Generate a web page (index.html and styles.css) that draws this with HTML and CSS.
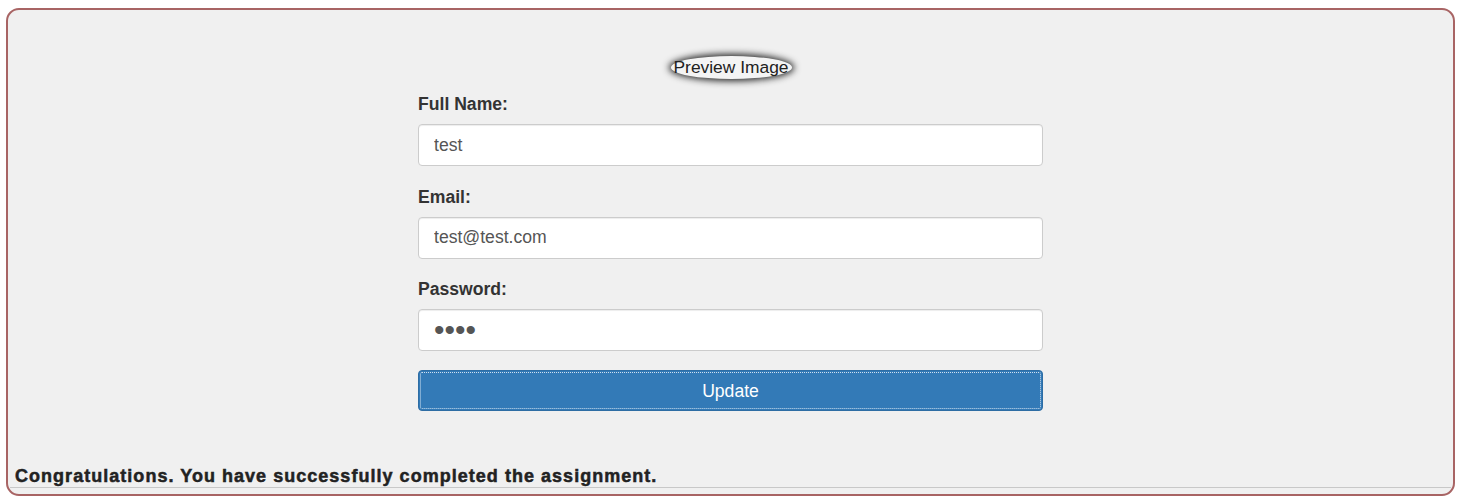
FILE: index.html
```html
<!DOCTYPE html>
<html>
<head>
<meta charset="utf-8">
<link rel="stylesheet" href="styles.css">
</head>
<body>
<div class="card">
  <div class="preview-row"><span class="preview">Preview Image</span></div>
  <form class="form">
    <div class="group">
      <label class="label">Full Name:</label>
      <input class="field" type="text" value="test">
    </div>
    <div class="group">
      <label class="label">Email:</label>
      <input class="field" type="text" value="test@test.com">
    </div>
    <div class="group last">
      <label class="label">Password:</label>
      <input class="field secret" type="password" value="test">
    </div>
    <div class="btn"><span>Update</span></div>
  </form>
  <div class="spacer"></div>
  <div class="result">Congratulations. You have successfully completed the assignment.</div>
</div>
</body>
</html>
```
FILE: styles.css
```css
* { box-sizing: border-box; }
html, body { margin: 0; padding: 0; background: #fff; }
body { font-family: "Liberation Sans", Arial, sans-serif; color: #333; }
.card {
  margin: 8px 6px 0 6px;
  height: 488px;
  border: 2px solid #a86464;
  border-radius: 13px;
  background: #f0f0f0;
  display: flex;
  flex-direction: column;
  padding: 0 2px 0 2px;
}
.preview-row {
  margin-top: 44px;
  display: flex;
  justify-content: center;
  height: 26px;
}
.preview {
  display: inline-block;
  width: 121px;
  height: 23px;
  margin-top: 1.5px;
  border-radius: 50%;
  background: #f4f4f4;
  box-shadow: 0 0 7px 2px rgba(0,0,0,0.85);
  font-size: 17.4px;
  line-height: 23px;
  text-align: center;
  color: #222;
  margin-left: 1px;
  white-space: nowrap;
}
.form {
  width: 625px;
  margin: 12px auto 0;
  display: flex;
  flex-direction: column;
}
.group { display: flex; flex-direction: column; margin-bottom: 18.5px; }
.group.last { margin-bottom: 19px; }
.label {
  font-weight: bold;
  font-size: 17.6px;
  line-height: 24px;
  margin-bottom: 8px;
  color: #333;
}
.field {
  height: 42px;
  border: 1px solid #ccc;
  border-radius: 4px;
  background: #fff;
  box-shadow: inset 0 1px 1px rgba(0,0,0,.075);
  padding: 0 15px;
  font-family: "Liberation Sans", Arial, sans-serif;
  font-size: 17.6px;
  color: #555;
  outline: none;
  width: 100%;
}
.field.secret {
  font-size: 30px;
  padding-left: 15px;
}
.btn {
  height: 41px;
  background: #337ab7;
  border: 1px solid #2e6da4;
  border-radius: 4px;
  padding: 1px;
  display: flex;
}
.btn span {
  flex: 1;
  border: 1px dotted #cfe0f0;
  border-radius: 2px;
  color: #fff;
  font-size: 17.6px;
  display: flex;
  align-items: center;
  justify-content: center;
  padding-top: 1px;
}
.spacer { flex: 1; }
.result {
  font-weight: bold;
  font-size: 18px;
  color: #222;
  line-height: 22px;
  padding-left: 5px;
  border-bottom: 1px solid #c8c8c8;
  margin-bottom: 6px;
  letter-spacing: 1.03px;
  -webkit-text-stroke: 0.5px #222;
}
```
